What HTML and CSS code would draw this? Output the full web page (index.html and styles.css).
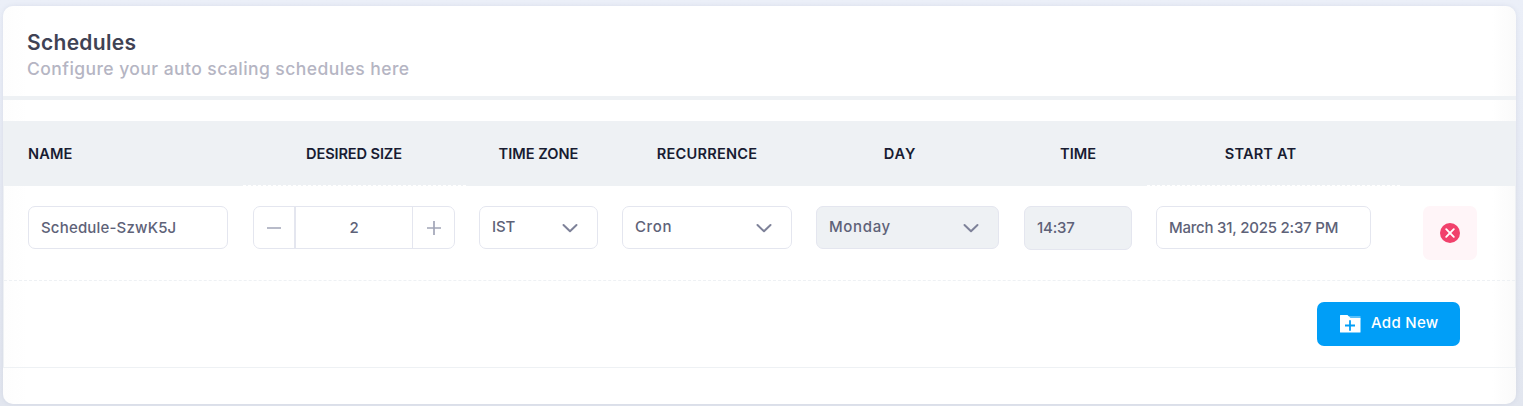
FILE: index.html
```html
<!DOCTYPE html>
<html lang="en">
<head>
<meta charset="utf-8">
<title>Schedules</title>
<link rel="stylesheet" href="styles.css">
</head>
<body>
<section class="card">
  <header class="card-header">
    <h1 class="title">Schedules</h1>
    <p class="subtitle">Configure your auto scaling schedules here</p>
  </header>
  <div class="table">
    <div class="grid thead">
      <span class="th-name">NAME</span>
      <span class="th th-size">DESIRED SIZE</span>
      <span class="th th-zone">TIME ZONE</span>
      <span class="th th-rec">RECURRENCE</span>
      <span class="th th-day">DAY</span>
      <span class="th th-time">TIME</span>
      <span class="th th-start">START AT</span>
      <i class="stitch stitch-size"></i>
      <i class="stitch stitch-start"></i>
    </div>
    <div class="grid row">
      <div class="field"><span class="t-name">Schedule-SzwK5J</span></div>
      <div class="stepper">
        <span class="step minus"><svg width="14" height="14" viewBox="0 0 14 14"><path d="M0 7h14"/></svg></span>
        <span class="count">2</span>
        <span class="step"><svg width="14" height="14" viewBox="0 0 14 14"><path d="M0 7h14M7 0v14"/></svg></span>
      </div>
      <div class="field select"><span class="t-ist">IST</span><svg class="chev" width="16" height="10" viewBox="0 0 16 10"><path d="M1.500 2L8 8.300l6.500-6.300"/></svg></div>
      <div class="field select"><span class="t-cron">Cron</span><svg class="chev" width="16" height="10" viewBox="0 0 16 10"><path d="M1.500 2L8 8.300l6.500-6.300"/></svg></div>
      <div class="field select disabled"><span class="t-mon">Monday</span><svg class="chev" width="16" height="10" viewBox="0 0 16 10"><path d="M1.500 2L8 8.300l6.500-6.300"/></svg></div>
      <div class="field disabled time"><span class="t-time">14:37</span></div>
      <div class="field"><span class="t-date">March 31, 2025 2:37 PM</span></div>
      <div class="remove"><svg width="20" height="20" viewBox="0 0 20 20"><circle cx="10" cy="10" r="10" fill="#f1416c"/><path d="M6.200 6.200l7.600 7.600M13.800 6.200l-7.600 7.600" stroke="#fff" stroke-width="1.900" stroke-linecap="round"/></svg></div>
    </div>
    <div class="footer">
      <div class="add">
        <svg width="21" height="18" viewBox="0 0 21 18"><path d="M9 1h11.500v4H9z" fill="#fff" opacity=".35"/><path d="M0 .5Q0 0 .5 0H7.500L10.500 3H20.500V17Q20.500 17.500 20 17.500H.5Q0 17.500 0 17z" fill="#fff"/><path d="M5 10.500h10M10 5.300v10.400" stroke="#009ef7" stroke-width="1.800"/></svg>
        <span class="t-add">Add New</span>
      </div>
    </div>
  </div>
</section>
</body>
</html>
```
FILE: styles.css
```css
* { box-sizing: border-box; }
body {
  margin: 0;
  height: 406px;
  overflow: hidden;
  padding: 6px 7px 0 3px;
  background: linear-gradient(180deg, #ebeff8, #e2e6ef);
  font-family: Inter, "Open Sans", sans-serif;
  font-size: 15px;
  font-weight: 500;
  color: #5e6278;
}
span { white-space: nowrap; }
.card {
  height: 398px;
  border-radius: 10px;
  overflow: hidden;
  background: linear-gradient(90deg, #fdfdfd, #fff 24px, #fff calc(100% - 24px), #fafafa);
  box-shadow: 0 0 5px rgba(76, 87, 125, .1);
}
.card-header {
  height: 94px;
  padding: 23px 24px 0;
  border-bottom: 4px solid #eef1f4;
}
.title { margin: 0; font-size: 21px; line-height: 27px; font-weight: 600; letter-spacing: .3px; color: #3f4254; }
.subtitle { margin: 0; font-size: 17.5px; line-height: 26px; letter-spacing: .44px; color: #b5b5c3; }
.table {
  margin: 21px 0 0 0;
  width: 1513px;
  height: 247px;
  border: 1px solid #eef1f4;
  border-top: 0;
}
.grid {
  display: grid;
  grid-template-columns: 200px 227px 143px 194px 207px 133px 239px 106px;
  padding-left: 24px;
}
.grid > :nth-child(2) { margin-left: 25px; }
.grid > :nth-child(n+3):nth-child(-n+5) { margin-left: 24px; }
.grid > :nth-child(6) { margin-left: 25px; }
.grid > :nth-child(7) { margin-left: 24px; }
.grid > :nth-child(8) { margin-left: 52px; }
.thead {
  position: relative;
  height: 65px;
  align-items: center;
  background: #eef1f4;
  color: #181c32;
  font-weight: 600;
  font-size: 14.6px;
  line-height: 64px;
}
.th { text-align: center; }
.th-name { letter-spacing: .15px; }
.th-size { letter-spacing: -.12px; }
.th-rec { letter-spacing: .2px; }
.th-day { padding-right: 15px; letter-spacing: .8px; }
.th-start { padding-right: 6px; letter-spacing: .15px; }
.grid > .stitch {
  position: absolute;
  bottom: 0;
  height: 1px;
  margin: 0;
  background: repeating-linear-gradient(90deg, #fff 0 3px, transparent 3px 5px);
}
.stitch-size { left: 239px; width: 225px; }
.stitch-start { left: 1143px; width: 254px; }
.row { height: 95px; padding-top: 20px; align-items: start; border-bottom: 1px dashed #eef1f4; }
.field, .stepper {
  display: flex;
  align-items: center;
  height: 43px;
  border: 1px solid #e4e6ef;
  border-radius: 7px;
  background: #fff;
}
.field { padding: 0 12px; }
.select { justify-content: space-between; padding-right: 19px; padding-bottom: 2px; }
.select .chev { margin-top: 3px; }
.chev { fill: none; stroke: #7e8299; stroke-width: 2; stroke-linecap: round; stroke-linejoin: round; }
.disabled { background: #eef1f4; }
.time { height: 44px; padding-bottom: 1px; }
.t-name { letter-spacing: .18px; }
.t-ist { letter-spacing: -.2px; }
.t-cron { letter-spacing: .6px; }
.t-mon { letter-spacing: .65px; }
.t-time { letter-spacing: -.2px; }
.t-date { letter-spacing: -.22px; }
.t-add { letter-spacing: .3px; }
.step { width: 41px; height: 41px; display: flex; align-items: center; justify-content: center; }
.minus { width: 40px; }
.step svg { stroke: #a1a5b7; stroke-width: 1.7; }
.count { flex: 1; align-self: stretch; line-height: 41px; text-align: center; border-left: 2px solid #e4e6ef; border-right: 1px solid #e4e6ef; }
.remove {
  height: 54px;
  display: flex;
  align-items: center;
  justify-content: center;
  border-radius: 7px;
  background: #fff5f8;
}
.footer { display: flex; justify-content: flex-end; padding: 21px 55px 0 0; }
.add {
  width: 143px;
  height: 44px;
  display: flex;
  align-items: center;
  padding-left: 23px;
  gap: 10px;
  border-radius: 7px;
  background: #009ef7;
  color: #fff;
}
.t-add { padding-bottom: 3px; }
```
